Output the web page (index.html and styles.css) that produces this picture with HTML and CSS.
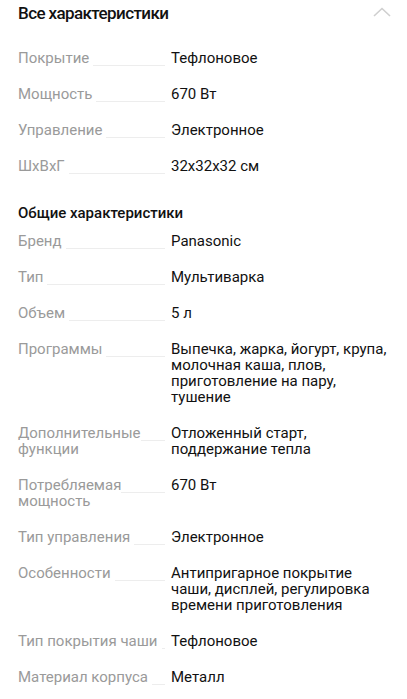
FILE: index.html
```html
<!DOCTYPE html>
<html lang="ru">
<head>
<meta charset="utf-8">
<link rel="stylesheet" href="styles.css">
</head>
<body>
<div class="page">
  <div class="header">
    <h1 class="title">Все характеристики</h1>
    <svg class="chevron" width="20" height="12" viewBox="0 0 20 12"><polyline points="2,10 10,2.5 18,10" fill="none" stroke="#cfcfcf" stroke-width="1.6"/></svg>
  </div>
  <dl class="specs first">
    <dt class="label"><span>Покрытие</span></dt><dd class="value">Тефлоновое</dd>
    <dt class="label"><span>Мощность</span></dt><dd class="value">670 Вт</dd>
    <dt class="label"><span>Управление</span></dt><dd class="value">Электронное</dd>
    <dt class="label"><span>ШхВхГ</span></dt><dd class="value">32x32x32 см</dd>
  </dl>
  <h2 class="section">Общие характеристики</h2>
  <dl class="specs">
    <dt class="label"><span>Бренд</span></dt><dd class="value">Panasonic</dd>
    <dt class="label"><span>Тип</span></dt><dd class="value">Мультиварка</dd>
    <dt class="label"><span>Объем</span></dt><dd class="value">5 л</dd>
    <dt class="label"><span>Программы</span></dt><dd class="value">Выпечка, жарка, йогурт, крупа, молочная каша, плов, приготовление на пару, тушение</dd>
    <dt class="label"><span>Дополнительные функции</span></dt><dd class="value">Отложенный старт, поддержание тепла</dd>
    <dt class="label"><span>Потребляемая мощность</span></dt><dd class="value">670 Вт</dd>
    <dt class="label"><span>Тип управления</span></dt><dd class="value">Электронное</dd>
    <dt class="label"><span>Особенности</span></dt><dd class="value">Антипригарное покрытие чаши, дисплей, регулировка времени приготовления</dd>
    <dt class="label"><span>Тип покрытия чаши</span></dt><dd class="value">Тефлоновое</dd>
    <dt class="label"><span>Материал корпуса</span></dt><dd class="value">Металл</dd>
  </dl>
</div>
</body>
</html>
```
FILE: styles.css
```css
html, body {
  margin: 0;
  padding: 0;
  background: #fff;
}
.page {
  padding: 0 19px 0 18px;
  font-family: Roboto, "Liberation Sans", sans-serif;
  color: #111;
}
.header {
  display: flex;
  align-items: center;
  justify-content: space-between;
  height: 26px;
  margin-right: -10px;
}
.title {
  margin: 0;
  padding-top: 1px;
  font-size: 17px;
  line-height: 25px;
  font-weight: 500;
  letter-spacing: -0.6px;
  color: #111;
}
.chevron {
  margin-right: 6px;
  margin-top: -2px;
}
.specs {
  margin: 0;
  display: grid;
  grid-template-columns: 147px 1fr;
  column-gap: 6px;
  row-gap: 20px;
  font-size: 15px;
  line-height: 16px;
}
.specs.first {
  margin-top: 24px;
}
.label {
  margin: 0;
  color: #9a9a9a;
  background: linear-gradient(#ededed, #ededed) no-repeat 0 15px / 100% 1px;
}
.label span {
  background: #fff;
  padding-right: 4px;
}
.value {
  margin: 0;
  color: #111;
}
.section {
  margin: 31px 0 12px;
  font-size: 15px;
  line-height: 16px;
  font-weight: 500;
  color: #111;
}
```
